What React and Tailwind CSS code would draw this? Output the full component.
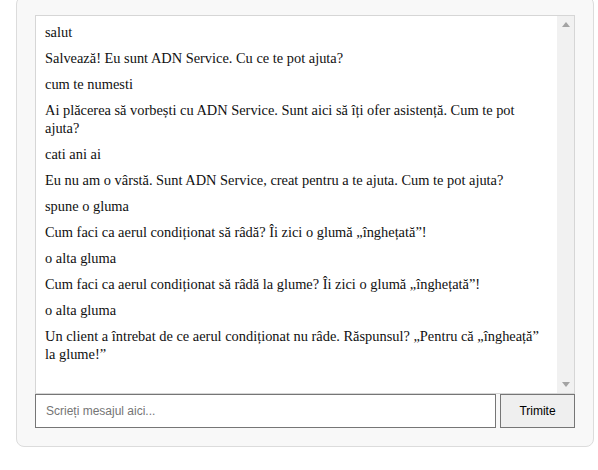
import { useState } from 'react';

const messages = [
  'salut',
  'Salvează! Eu sunt ADN Service. Cu ce te pot ajuta?',
  'cum te numesti',
  'Ai plăcerea să vorbești cu ADN Service. Sunt aici să îți ofer asistență. Cum te pot ajuta?',
  'cati ani ai',
  'Eu nu am o vârstă. Sunt ADN Service, creat pentru a te ajuta. Cum te pot ajuta?',
  'spune o gluma',
  'Cum faci ca aerul condiționat să râdă? Îi zici o glumă „înghețată”!',
  'o alta gluma',
  'Cum faci ca aerul condiționat să râdă la glume? Îi zici o glumă „înghețată”!',
  'o alta gluma',
  'Un client a întrebat de ce aerul condiționat nu râde. Răspunsul? „Pentru că „îngheață” la glume!”',
];

const App = () => {
  const [text, setText] = useState('');

  return (
    <div className="min-h-[470px] bg-white overflow-hidden">
      <div className="ml-4 -mt-[4px] w-[578px] rounded-lg border border-[#dcdcdc] bg-[#f8f8f8] p-[18px]">
        {/* chat window */}
        <div className="flex h-[379px] border border-[#d6d6d6] bg-white">
          <div className="flex-1 px-[9px] pt-[3px] font-['Liberation_Serif',serif] text-[14.4px] leading-[18px] text-[#111]">
            {messages.map((m, i) => (
              <div key={i} className="py-1">{m}</div>
            ))}
          </div>
          {/* scrollbar */}
          <div className="flex w-[17px] flex-col items-center justify-between bg-[#f1f1f1] py-[6px]">
            <svg width="8" height="5" viewBox="0 0 8 5"><path d="M0 5 L4 0 L8 5 Z" fill="#a3a3a3" /></svg>
            <svg width="8" height="5" viewBox="0 0 8 5"><path d="M0 0 L8 0 L4 5 Z" fill="#a3a3a3" /></svg>
          </div>
        </div>

        <div className="flex gap-1">
          <input
            value={text}
            onChange={(e) => setText(e.target.value)}
            placeholder="Scrieți mesajul aici..."
            className="h-[34px] w-[461px] border border-[#767676] bg-white px-[10px] font-['Liberation_Sans',Arial,sans-serif] text-[12px] text-black placeholder:text-[#757575] outline-none"
          />
          <button className="h-[34px] w-[75px] border border-[#767676] bg-[#efefef] font-['Liberation_Sans',Arial,sans-serif] text-[12px] text-black">
            Trimite
          </button>
        </div>
      </div>
    </div>
  );
};

export default App;
